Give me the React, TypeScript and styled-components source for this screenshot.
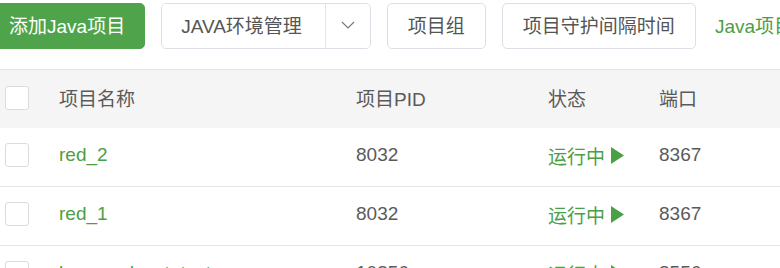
import React from "react";
import styled, { createGlobalStyle } from "styled-components";

const Global = createGlobalStyle`
  html, body { margin: 0; padding: 0; background: #fff; overflow: hidden; }
  body { font-family: "Liberation Sans", "Noto Sans CJK SC", sans-serif; font-size: 19px; color: #5a5a5a; }
`;

const Page = styled.div`
  width: 780px;
  height: 268px;
  overflow: hidden;
`;

const Toolbar = styled.div`
  display: flex;
  align-items: center;
  gap: 16px;
  margin-left: -12px;
  padding-top: 3px;
  height: 46px;
  white-space: nowrap;
`;

const BaseButton = styled.button`
  font-family: inherit;
  font-size: 19px;
  height: 46px;
  padding: 0 20px 3px;
  border-radius: 5px;
  display: flex;
  align-items: center;
  cursor: pointer;
  box-sizing: border-box;
  flex-shrink: 0;
`;

const PrimaryButton = styled(BaseButton)`
  background: #4fa44b;
  border: 1px solid #4fa44b;
  color: #fff;
  padding: 0 19px 3px 20px;
`;

const DefaultButton = styled(BaseButton)`
  background: #fff;
  border: 1px solid #dcdfe6;
  color: #555;
`;

const Split = styled.div`
  display: flex;
  flex-shrink: 0;
  height: 46px;
  border: 1px solid #dcdfe6;
  border-radius: 5px;
  box-sizing: border-box;
  overflow: hidden;
`;

const SplitMain = styled.button`
  font-family: inherit;
  font-size: 19px;
  color: #555;
  background: #fff;
  border: none;
  border-right: 1px solid #e3e5ea;
  padding: 0 23px 3px 19px;
  height: 100%;
  flex-shrink: 0;
`;

const SplitArrow = styled.button`
  width: 44px;
  flex: 0 0 44px;
  background: #fff;
  border: none;
  display: flex;
  align-items: center;
  justify-content: center;
  padding: 0 0 3px;
  height: 100%;
`;

const LinkText = styled.span`
  color: #4ba046;
  font-size: 19px;
  margin-left: 3px;
  padding-bottom: 3px;
`;

const Table = styled.div`
  margin-top: 20px;
  border-top: 1px solid #e6e6e6;
`;

const Row = styled.div<{ $head?: boolean }>`
  display: grid;
  grid-template-columns: 59px 297px 192px 111px 1fr;
  align-items: center;
  box-sizing: border-box;
  height: ${(p) => (p.$head ? "58px" : "59px")};
  padding-bottom: ${(p) => (p.$head ? "3px" : "4px")};
  background: ${(p) => (p.$head ? "#f5f5f5" : "#fff")};
  border-bottom: ${(p) => (p.$head ? "none" : "1px solid #e4e4e4")};
`;

const CheckCell = styled.div`
  padding-left: 5px;
  display: flex;
  align-items: center;
`;

const Checkbox = styled.span`
  width: 24px;
  height: 24px;
  box-sizing: border-box;
  border: 1px solid #dcdcdc;
  border-radius: 3px;
  background: #fff;
  display: block;
`;

const Cell = styled.div<{ $green?: boolean }>`
  color: ${(p) => (p.$green ? "#4ba046" : "#5a5a5a")};
  white-space: nowrap;
  display: flex;
  align-items: center;
`;

const Play = styled.svg`
  margin-left: 6px;
`;

const rows = [
  { name: "red_2", pid: "8032", port: "8367" },
  { name: "red_1", pid: "8032", port: "8367" },
  { name: "bwsaved_est_test", pid: "10856", port: "8556" },
];

export default function App() {
  return (
    <Page>
      <Global />
      <Toolbar>
        <PrimaryButton>添加Java项目</PrimaryButton>
        <Split>
          <SplitMain>JAVA环境管理</SplitMain>
          <SplitArrow>
            <svg width="14" height="8" viewBox="0 0 14 8">
              <polyline points="1,1 7,7 13,1" fill="none" stroke="#777" strokeWidth="1.1" />
            </svg>
          </SplitArrow>
        </Split>
        <DefaultButton>项目组</DefaultButton>
        <DefaultButton>项目守护间隔时间</DefaultButton>
        <LinkText>Java项目</LinkText>
      </Toolbar>
      <Table>
        <Row $head>
          <CheckCell>
            <Checkbox />
          </CheckCell>
          <Cell>项目名称</Cell>
          <Cell>项目PID</Cell>
          <Cell>状态</Cell>
          <Cell>端口</Cell>
        </Row>
        {rows.map((r, i) => (
          <Row key={i}>
            <CheckCell>
              <Checkbox />
            </CheckCell>
            <Cell $green>{r.name}</Cell>
            <Cell>{r.pid}</Cell>
            <Cell $green>
              运行中
              <Play width="13" height="17" viewBox="0 0 13 17">
                <polygon points="0,0 13,8.5 0,17" fill="#4ba046" />
              </Play>
            </Cell>
            <Cell>{r.port}</Cell>
          </Row>
        ))}
      </Table>
    </Page>
  );
}
